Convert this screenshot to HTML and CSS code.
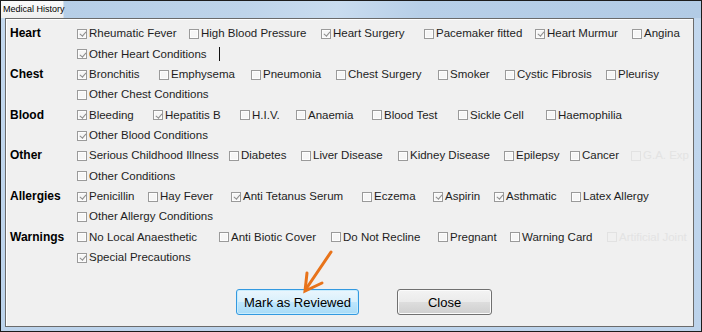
FILE: index.html
```html
<!DOCTYPE html>
<html>
<head>
<meta charset="utf-8">
<title>Medical History</title>
<link rel="stylesheet" href="styles.css">
</head>
<body>
<div class="window">
  <div class="titlebar"><div class="tab">Medical History</div></div>
  <div class="panel">
    <div class="section">
      <div class="label">Heart</div>
      <div class="items">
        <div class="line heart">
          <span class="cb on"><span class="box"></span>Rheumatic Fever</span>
          <span class="cb"><span class="box"></span>High Blood Pressure</span>
          <span class="cb on"><span class="box"></span>Heart Surgery</span>
          <span class="cb"><span class="box"></span>Pacemaker fitted</span>
          <span class="cb on"><span class="box"></span>Heart Murmur</span>
          <span class="cb"><span class="box"></span>Angina</span>
        </div>
        <div class="line heart-other">
          <span class="cb on"><span class="box"></span>Other Heart Conditions</span>
          <span class="caret"></span>
        </div>
      </div>
    </div>
    <div class="section">
      <div class="label">Chest</div>
      <div class="items">
        <div class="line chest">
          <span class="cb on"><span class="box"></span>Bronchitis</span>
          <span class="cb"><span class="box"></span>Emphysema</span>
          <span class="cb"><span class="box"></span>Pneumonia</span>
          <span class="cb"><span class="box"></span>Chest Surgery</span>
          <span class="cb"><span class="box"></span>Smoker</span>
          <span class="cb"><span class="box"></span>Cystic Fibrosis</span>
          <span class="cb"><span class="box"></span>Pleurisy</span>
        </div>
        <div class="line">
          <span class="cb"><span class="box"></span>Other Chest Conditions</span>
        </div>
      </div>
    </div>
    <div class="section">
      <div class="label">Blood</div>
      <div class="items">
        <div class="line blood">
          <span class="cb on"><span class="box"></span>Bleeding</span>
          <span class="cb on"><span class="box"></span>Hepatitis B</span>
          <span class="cb"><span class="box"></span>H.I.V.</span>
          <span class="cb"><span class="box"></span>Anaemia</span>
          <span class="cb"><span class="box"></span>Blood Test</span>
          <span class="cb"><span class="box"></span>Sickle Cell</span>
          <span class="cb"><span class="box"></span>Haemophilia</span>
        </div>
        <div class="line">
          <span class="cb on"><span class="box"></span>Other Blood Conditions</span>
        </div>
      </div>
    </div>
    <div class="section">
      <div class="label">Other</div>
      <div class="items">
        <div class="line other">
          <span class="cb"><span class="box"></span>Serious Childhood Illness</span>
          <span class="cb"><span class="box"></span>Diabetes</span>
          <span class="cb"><span class="box"></span>Liver Disease</span>
          <span class="cb"><span class="box"></span>Kidney Disease</span>
          <span class="cb"><span class="box"></span>Epilepsy</span>
          <span class="cb"><span class="box"></span>Cancer</span>
          <span class="cb ghost"><span class="box"></span>G.A. Exp</span>
        </div>
        <div class="line">
          <span class="cb"><span class="box"></span>Other Conditions</span>
        </div>
      </div>
    </div>
    <div class="section">
      <div class="label">Allergies</div>
      <div class="items">
        <div class="line allergies">
          <span class="cb on"><span class="box"></span>Penicillin</span>
          <span class="cb"><span class="box"></span>Hay Fever</span>
          <span class="cb on"><span class="box"></span>Anti Tetanus Serum</span>
          <span class="cb"><span class="box"></span>Eczema</span>
          <span class="cb on"><span class="box"></span>Aspirin</span>
          <span class="cb on"><span class="box"></span>Asthmatic</span>
          <span class="cb"><span class="box"></span>Latex Allergy</span>
        </div>
        <div class="line">
          <span class="cb"><span class="box"></span>Other Allergy Conditions</span>
        </div>
      </div>
    </div>
    <div class="section">
      <div class="label">Warnings</div>
      <div class="items">
        <div class="line warnings">
          <span class="cb"><span class="box"></span>No Local Anaesthetic</span>
          <span class="cb"><span class="box"></span>Anti Biotic Cover</span>
          <span class="cb"><span class="box"></span>Do Not Recline</span>
          <span class="cb"><span class="box"></span>Pregnant</span>
          <span class="cb"><span class="box"></span>Warning Card</span>
          <span class="cb ghost"><span class="box"></span>Artificial Joint</span>
        </div>
        <div class="line">
          <span class="cb on"><span class="box"></span>Special Precautions</span>
        </div>
      </div>
    </div>
    <div class="buttons">
      <button class="btn primary">Mark as Reviewed</button>
      <button class="btn">Close</button>
    </div>
  </div>
  <svg class="arrow" width="40" height="52" viewBox="0 0 40 52">
    <line x1="33" y1="6" x2="8" y2="43" stroke="#e8731a" stroke-width="3" stroke-linecap="round"/>
    <polyline points="9,27 7,45 24,37" fill="none" stroke="#e8731a" stroke-width="3" stroke-linecap="round" stroke-linejoin="miter"/>
  </svg>
</div>
</body>
</html>
```

FILE: styles.css
```css
* { box-sizing: border-box; }

html, body {
  margin: 0;
  padding: 0;
}

body {
  width: 702px;
  height: 332px;
  overflow: hidden;
  font-family: "Liberation Sans", Arial, sans-serif;
}

.window {
  position: relative;
  width: 702px;
  height: 332px;
  border: 1px solid #1c1c1c;
  background: linear-gradient(180deg, #c3d8ee 0%, #bcd3eb 100%);
  display: flex;
  flex-direction: column;
  padding: 0 7px 4px 4px;
}

.titlebar {
  height: 17px;
  margin: 0 -7px 0 -4px;
  background: linear-gradient(100deg, #b3cce6 0%, #bed4ea 35%, #c9dcef 48%, #b7cfe8 60%, #b2cbe5 100%);
  display: flex;
}

.tab {
  width: 63px;
  height: 17px;
  background: linear-gradient(180deg, #fbfbfb 0%, #eeeeee 100%);
  color: #000;
  font-size: 9px;
  line-height: 17px;
  padding-left: 2px;
  white-space: nowrap;
  border-right: 1px solid #d6dfe9;
}

.panel {
  flex: 1;
  background: #f0f0f0;
  border: 1px solid #6b6b6b;
  box-shadow: inset 1px 1px 0 #ffffff;
  padding: 4.33px 0 0 4px;
  overflow: hidden;
}

.section {
  display: grid;
  grid-template-columns: 67px 1fr;
}

.label {
  font-weight: bold;
  font-size: 12px;
  color: #000;
  line-height: 20.33px;
  height: 20.33px;
  white-space: nowrap;
}

.line {
  display: grid;
  grid-template-columns: auto;
  justify-content: start;
  align-items: center;
  height: 20.33px;
  white-space: nowrap;
}

.heart { grid-template-columns: 112px 132px 103px 111px 97px auto; }
.heart-other { grid-template-columns: 142px auto; }
.chest { grid-template-columns: 82px 92px 85px 102px 67px 101px auto; }
.blood { grid-template-columns: 76px 87px 56px 76px 86px 88px auto; }
.other { grid-template-columns: 152px 72px 97px 106px 66px 61px auto; }
.allergies { grid-template-columns: 71px 83px 131px 71px 61px 77px auto; }
.warnings { grid-template-columns: 142px 112px 107px 72px 97px auto; }

.cb {
  display: flex;
  align-items: center;
  gap: 2px;
  font-size: 11.5px;
  color: #1e1e1e;
  white-space: nowrap;
}

.box {
  position: relative;
  flex: none;
  width: 10px;
  height: 10px;
  border: 1px solid #9a9a9a;
  background: #f6f6f6;
  box-shadow: inset 0 0 0 1px #fdfdfd;
  margin-top: 1px;
}

.cb.on .box::after {
  content: "";
  position: absolute;
  left: 2.6px;
  top: 0.5px;
  width: 2.5px;
  height: 5px;
  border: solid #8d8d8d;
  border-width: 0 1.3px 1.3px 0;
  transform: rotate(40deg);
}

.cb.ghost {
  color: #e3e3e3;
}

.cb.ghost .box {
  border-color: #e2e2e2;
  background: #f0f0f0;
  box-shadow: none;
}

.caret {
  width: 1px;
  height: 14px;
  background: #111;
  margin-top: 1px;
}

.buttons {
  display: flex;
  gap: 38px;
  margin-top: 22px;
  padding-left: 226px;
}

.btn {
  height: 26px;
  width: 95px;
  font-family: "Liberation Sans", Arial, sans-serif;
  font-size: 13px;
  color: #000;
  border: 1px solid #707070;
  border-radius: 3px;
  background: linear-gradient(180deg, #f3f3f3 0%, #ebebeb 48%, #dddddd 52%, #cfcfcf 100%);
  box-shadow: inset 0 0 0 1px #fbfbfb;
  padding: 0;
}

.btn.primary {
  width: 123px;
  border-color: #3399e0;
  background: linear-gradient(180deg, #eaf6fd 0%, #d9f0fc 48%, #bee6fd 52%, #a9dbf6 100%);
  box-shadow: inset 0 0 0 1px #c8ecfd;
}

.arrow {
  position: absolute;
  left: 297px;
  top: 245px;
}
```
